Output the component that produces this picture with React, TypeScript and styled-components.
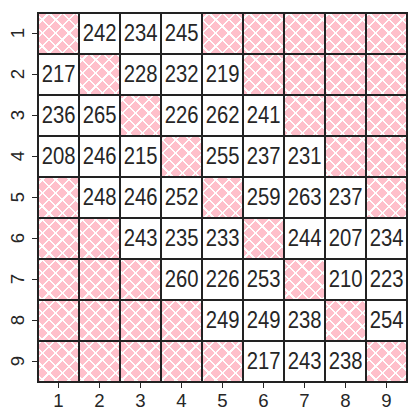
import styled, { createGlobalStyle, css } from 'styled-components'

const GlobalStyle = createGlobalStyle`
html, body {
    margin: 0;
    padding: 0;
    background: #fff;
}
body {
    font-family: "Liberation Sans", Arial, sans-serif;
    color: #262626;
}
`

const Chart = styled.div`
display: grid;
grid-template-columns: 37px 371px;
grid-template-rows: 371px auto;
padding-top: 12px;
`

const YAxis = styled.div`
display: flex;
flex-direction: column;
gap: 2px;
padding-top: 2px;
`

const YTick = styled.div`
height: 39px;
display: flex;
align-items: center;
justify-content: flex-end;
>span{
    writing-mode: vertical-rl;
    transform: rotate(180deg);
    font-size: 18.6px;
    line-height: 1;
    margin-right: 4px;
}
>i{
    width: 5px;
    height: 1.5px;
    background: #262626;
}
`

const Board = styled.div`
display: grid;
grid-template-columns: repeat(9, 39px);
grid-auto-rows: 39px;
gap: 2px;
padding: 2px;
background: #222;
`

const hatch = css`
background-image:
    repeating-linear-gradient(45deg, transparent 0 1px, #fff 1px 2.7px, transparent 2.7px 9.428px),
    repeating-linear-gradient(-45deg, transparent 0 2.4px, #fff 2.4px 4.1px, transparent 4.1px 9.428px);
background-attachment: fixed;
`

const Cell = styled.div<{ $hatched: boolean }>`
display: flex;
align-items: center;
justify-content: center;
background-color: ${p => (p.$hatched ? '#ffc0cb' : '#fff')};
${p => p.$hatched && hatch}
>span{
    font-size: 24.7px;
    line-height: 1;
    transform: scaleX(0.82);
    white-space: nowrap;
}
`

const XAxis = styled.div`
grid-column: 2;
display: grid;
grid-template-columns: repeat(9, 39px);
gap: 2px;
padding: 0 2px;
`

const XTick = styled.div`
display: flex;
flex-direction: column;
align-items: center;
>i{
    width: 1.5px;
    height: 5px;
    background: #262626;
}
>span{
    font-size: 18.6px;
    line-height: 1;
    margin-top: 4px;
}
`

// 0 = hatched (masked) cell
const data: number[][] = [
    [0, 242, 234, 245, 0, 0, 0, 0, 0],
    [217, 0, 228, 232, 219, 0, 0, 0, 0],
    [236, 265, 0, 226, 262, 241, 0, 0, 0],
    [208, 246, 215, 0, 255, 237, 231, 0, 0],
    [0, 248, 246, 252, 0, 259, 263, 237, 0],
    [0, 0, 243, 235, 233, 0, 244, 207, 234],
    [0, 0, 0, 260, 226, 253, 0, 210, 223],
    [0, 0, 0, 0, 249, 249, 238, 0, 254],
    [0, 0, 0, 0, 0, 217, 243, 238, 0],
]

const labels = [1, 2, 3, 4, 5, 6, 7, 8, 9]

const App = () => {
    return (
        <>
            <GlobalStyle />
            <Chart>
                <YAxis>
                    {labels.map(l => (
                        <YTick key={l}>
                            <span>{l}</span>
                            <i />
                        </YTick>
                    ))}
                </YAxis>
                <Board>
                    {data.map((row, r) =>
                        row.map((v, c) => (
                            <Cell key={`${r}-${c}`} $hatched={v === 0}>
                                {v !== 0 && <span>{v}</span>}
                            </Cell>
                        ))
                    )}
                </Board>
                <XAxis>
                    {labels.map(l => (
                        <XTick key={l}>
                            <i />
                            <span>{l}</span>
                        </XTick>
                    ))}
                </XAxis>
            </Chart>
        </>
    )
}

export default App
